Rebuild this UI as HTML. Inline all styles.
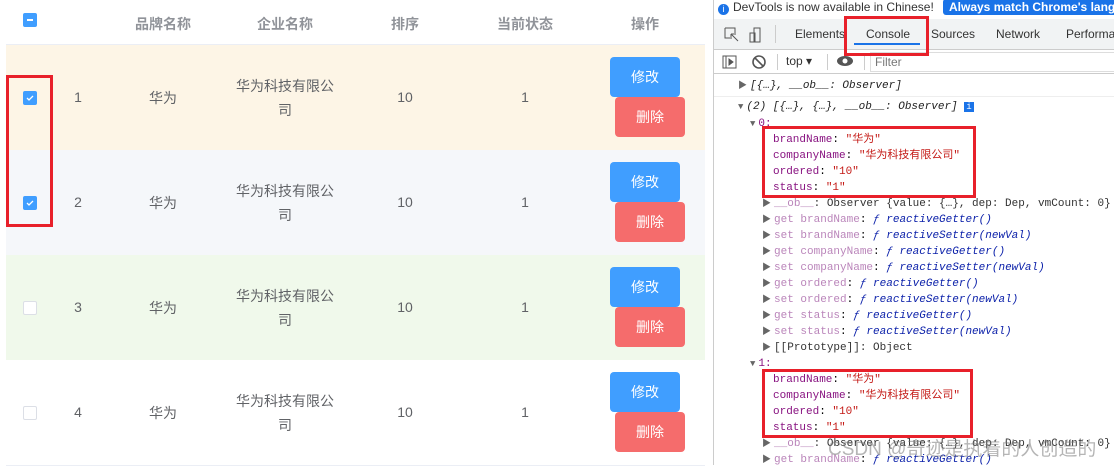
<!DOCTYPE html>
<html><head><meta charset="utf-8"><style>
body{margin:0;width:1114px;height:465px;overflow:hidden;background:#fff;font-family:"Liberation Sans","Noto Sans CJK SC",sans-serif;position:relative}
.abs{position:absolute}
.t{position:absolute;font-size:14px;color:#606266;text-align:center}
.row{position:absolute;left:6px;width:699px;height:105px;border-bottom:1px solid #ebeef5}
.cb{position:absolute;width:12px;height:12px;border:1px solid #dcdfe6;border-radius:2px;background:#fff}
.cb.on{background:#409eff;border-color:#409eff}
.btn{position:absolute;width:70px;height:40px;border-radius:4px;color:#fff;font-size:14px;line-height:40px;text-align:center}
.red{position:absolute;border:3px solid #e8202a;box-sizing:border-box}
.dt{position:absolute;left:714px;width:400px;font-family:"Liberation Mono","Noto Sans CJK SC",monospace;font-size:11px;line-height:16px;white-space:nowrap}
.k{color:#881280}.s{color:#c41a16}.g{color:#a35ca3;opacity:.75}.f{color:#0d22aa;font-style:italic}.i{font-style:italic;color:#222}
.tri{color:#666;font-size:9px;margin-right:3px}
</style></head><body>
<div class="abs" style="left:6px;top:0;width:699px;height:44px;border-bottom:1px solid #ebeef5"></div>
<div class="cb on" style="left:23px;top:13px"><div style="position:absolute;left:3px;top:5px;width:6px;height:2px;background:#fff"></div></div>
<div class="t" style="left:113px;top:14px;width:100px;color:#909399;font-weight:bold">品牌名称</div>
<div class="t" style="left:235px;top:14px;width:100px;color:#909399;font-weight:bold">企业名称</div>
<div class="t" style="left:355px;top:14px;width:100px;color:#909399;font-weight:bold">排序</div>
<div class="t" style="left:475px;top:14px;width:100px;color:#909399;font-weight:bold">当前状态</div>
<div class="t" style="left:595px;top:14px;width:100px;color:#909399;font-weight:bold">操作</div>

<div class="row" style="top:45px;background:#fdf5e6"></div>
<div class="row" style="top:150px;background:#f5f7fa"></div>
<div class="row" style="top:255px;background:#f0f9eb"></div>
<div class="row" style="top:360px;background:#fff"></div>

<div class="cb on" style="left:23px;top:91px"><svg width="12" height="12" style="position:absolute;left:0;top:0"><path d="M3 6l2 2 4-4" stroke="#fff" stroke-width="1.3" fill="none"/></svg></div>
<div class="cb on" style="left:23px;top:196px"><svg width="12" height="12" style="position:absolute;left:0;top:0"><path d="M3 6l2 2 4-4" stroke="#fff" stroke-width="1.3" fill="none"/></svg></div>
<div class="cb" style="left:23px;top:301px"></div>
<div class="cb" style="left:23px;top:406px"></div>

<div class="t" style="left:58px;top:89px;width:40px">1</div>
<div class="t" style="left:58px;top:194px;width:40px">2</div>
<div class="t" style="left:58px;top:299px;width:40px">3</div>
<div class="t" style="left:58px;top:404px;width:40px">4</div>
<div class="t" style="left:113px;top:88px;width:100px">华为</div>
<div class="t" style="left:113px;top:193px;width:100px">华为</div>
<div class="t" style="left:113px;top:298px;width:100px">华为</div>
<div class="t" style="left:113px;top:403px;width:100px">华为</div>
<div class="t" style="left:230px;top:74px;width:110px;line-height:24px">华为科技有限公司</div>
<div class="t" style="left:230px;top:179px;width:110px;line-height:24px">华为科技有限公司</div>
<div class="t" style="left:230px;top:284px;width:110px;line-height:24px">华为科技有限公司</div>
<div class="t" style="left:230px;top:389px;width:110px;line-height:24px">华为科技有限公司</div>
<div class="t" style="left:355px;top:89px;width:100px">10</div>
<div class="t" style="left:355px;top:194px;width:100px">10</div>
<div class="t" style="left:355px;top:299px;width:100px">10</div>
<div class="t" style="left:355px;top:404px;width:100px">10</div>
<div class="t" style="left:475px;top:89px;width:100px">1</div>
<div class="t" style="left:475px;top:194px;width:100px">1</div>
<div class="t" style="left:475px;top:299px;width:100px">1</div>
<div class="t" style="left:475px;top:404px;width:100px">1</div>

<div class="btn" style="left:610px;top:57px;background:#409eff">修改</div>
<div class="btn" style="left:615px;top:97px;background:#f56c6c">删除</div>
<div class="btn" style="left:610px;top:162px;background:#409eff">修改</div>
<div class="btn" style="left:615px;top:202px;background:#f56c6c">删除</div>
<div class="btn" style="left:610px;top:267px;background:#409eff">修改</div>
<div class="btn" style="left:615px;top:307px;background:#f56c6c">删除</div>
<div class="btn" style="left:610px;top:372px;background:#409eff">修改</div>
<div class="btn" style="left:615px;top:412px;background:#f56c6c">删除</div>

<div class="red" style="left:6px;top:75px;width:47px;height:152px"></div>

<div class="abs" style="left:706px;top:0;width:7px;height:465px;background:#fff;border-right:1px solid #ccc"></div>
<div class="abs" style="left:714px;top:0;width:400px;height:17px;background:#fff;font-size:12px;line-height:14px;color:#333;white-space:nowrap">
 <span style="display:inline-block;width:11px;height:11px;border-radius:50%;background:#1a73e8;color:#fff;font-size:9px;text-align:center;line-height:11px;margin:0 4px 0 4px;vertical-align:-1px">i</span>DevTools is now available in Chinese!
 <span style="position:absolute;left:229px;top:-1px;background:#1a73e8;color:#fff;font-weight:bold;padding:1px 6px;border-radius:3px;white-space:nowrap">Always match Chrome's language</span>
</div>
<div class="abs" style="left:714px;top:19px;width:400px;height:30px;background:#f1f3f4;border-bottom:1px solid #ccc;font-size:12px;color:#333">
 <svg class="abs" style="left:10px;top:8px" width="40" height="16"><path d="M1 1h10v5M1 1v10h5M7 7l7 7M7 7h5M7 7v5" stroke="#555" fill="none"/><path d="M30 1h6v14h-6zM26 6h5v9h-5z" stroke="#555" fill="none"/></svg>
 <div class="abs" style="left:61px;top:6px;width:1px;height:18px;background:#ccc"></div>
 <span class="abs" style="left:81px;top:8px">Elements</span>
 <span class="abs" style="left:152px;top:8px">Console</span>
 <div class="abs" style="left:140px;top:24px;width:66px;height:2px;background:#1a73e8"></div>
 <span class="abs" style="left:217px;top:8px">Sources</span>
 <span class="abs" style="left:282px;top:8px">Network</span>
 <span class="abs" style="left:352px;top:8px">Performance</span>
</div>
<div class="abs" style="left:714px;top:50px;width:400px;height:23px;background:#fff;border-bottom:1px solid #ccc;font-size:12px;color:#333">
 <svg class="abs" style="left:8px;top:4px" width="60" height="16"><rect x="1" y="2" width="13" height="12" fill="none" stroke="#555"/><path d="M4 2v12M7 5l4 3-4 3z" stroke="#555" fill="#555"/><circle cx="37" cy="8" r="6" fill="none" stroke="#555" stroke-width="1.6"/><path d="M33 4l8 8" stroke="#555" stroke-width="1.6"/></svg>
 <div class="abs" style="left:63px;top:4px;width:1px;height:16px;background:#ccc"></div>
 <span class="abs" style="left:72px;top:4px">top ▾</span>
 <div class="abs" style="left:113px;top:4px;width:1px;height:16px;background:#ccc"></div>
 <svg class="abs" style="left:122px;top:5px" width="18" height="12"><ellipse cx="9" cy="6" rx="8" ry="5" fill="#555"/><circle cx="9" cy="6" r="2.5" fill="#fff"/></svg>
 <div class="abs" style="left:150px;top:4px;width:1px;height:16px;background:#ccc"></div>
 <div class="abs" style="left:156px;top:2px;width:250px;height:18px;border:1px solid #ddd"><span style="position:absolute;left:4px;top:2px;color:#777">Filter</span></div>
</div>
<div class="abs" style="left:714px;top:96px;width:400px;height:1px;background:#eee"></div>
<div class="dt" style="top:78px;left:738px"><span class="tri">▶</span><span class="i">[{…}, __ob__: Observer]</span></div>
<div class="dt" style="top:99px;left:738px"><span class="tri">▼</span><span class="i">(2) [{…}, {…}, __ob__: Observer]</span> <span style="background:#1a73e8;color:#fff;font-size:9px;padding:0 2px">i</span></div>
<div class="dt" style="top:116px;left:750px"><span class="tri">▼</span><span class="k">0:</span></div>
<div class="dt" style="top:132px;left:773px"><span class="k">brandName</span>: <span class="s">"华为"</span></div>
<div class="dt" style="top:148px;left:773px"><span class="k">companyName</span>: <span class="s">"华为科技有限公司"</span></div>
<div class="dt" style="top:164px;left:773px"><span class="k">ordered</span>: <span class="s">"10"</span></div>
<div class="dt" style="top:180px;left:773px"><span class="k">status</span>: <span class="s">"1"</span></div>
<div class="dt" style="top:196px;left:762px;color:#333"><span class="tri">▶</span><span class="g">__ob__</span>: Observer {value: {…}, dep: Dep, vmCount: 0}</div>
<div class="dt" style="top:212px;left:762px"><span class="tri">▶</span><span class="g">get brandName</span>: <span class="f">ƒ reactiveGetter()</span></div>
<div class="dt" style="top:228px;left:762px"><span class="tri">▶</span><span class="g">set brandName</span>: <span class="f">ƒ reactiveSetter(newVal)</span></div>
<div class="dt" style="top:244px;left:762px"><span class="tri">▶</span><span class="g">get companyName</span>: <span class="f">ƒ reactiveGetter()</span></div>
<div class="dt" style="top:260px;left:762px"><span class="tri">▶</span><span class="g">set companyName</span>: <span class="f">ƒ reactiveSetter(newVal)</span></div>
<div class="dt" style="top:276px;left:762px"><span class="tri">▶</span><span class="g">get ordered</span>: <span class="f">ƒ reactiveGetter()</span></div>
<div class="dt" style="top:292px;left:762px"><span class="tri">▶</span><span class="g">set ordered</span>: <span class="f">ƒ reactiveSetter(newVal)</span></div>
<div class="dt" style="top:308px;left:762px"><span class="tri">▶</span><span class="g">get status</span>: <span class="f">ƒ reactiveGetter()</span></div>
<div class="dt" style="top:324px;left:762px"><span class="tri">▶</span><span class="g">set status</span>: <span class="f">ƒ reactiveSetter(newVal)</span></div>
<div class="dt" style="top:340px;left:762px;color:#333"><span class="tri">▶</span>[[Prototype]]: Object</div>
<div class="dt" style="top:356px;left:750px"><span class="tri">▼</span><span class="k">1:</span></div>
<div class="dt" style="top:372px;left:773px"><span class="k">brandName</span>: <span class="s">"华为"</span></div>
<div class="dt" style="top:388px;left:773px"><span class="k">companyName</span>: <span class="s">"华为科技有限公司"</span></div>
<div class="dt" style="top:404px;left:773px"><span class="k">ordered</span>: <span class="s">"10"</span></div>
<div class="dt" style="top:420px;left:773px"><span class="k">status</span>: <span class="s">"1"</span></div>
<div class="dt" style="top:436px;left:762px;color:#333"><span class="tri">▶</span><span class="g">__ob__</span>: Observer {value: {…}, dep: Dep, vmCount: 0}</div>
<div class="dt" style="top:452px;left:762px"><span class="tri">▶</span><span class="g">get brandName</span>: <span class="f">ƒ reactiveGetter()</span></div>
<div class="abs" style="left:828px;top:434px;font-size:19px;color:rgba(120,120,120,.55);white-space:nowrap">CSDN @奇迹是执着的人创造的</div>

<div class="red" style="left:844px;top:16px;width:85px;height:40px"></div>
<div class="red" style="left:762px;top:126px;width:214px;height:72px"></div>
<div class="red" style="left:762px;top:369px;width:211px;height:69px"></div>
</body></html>
